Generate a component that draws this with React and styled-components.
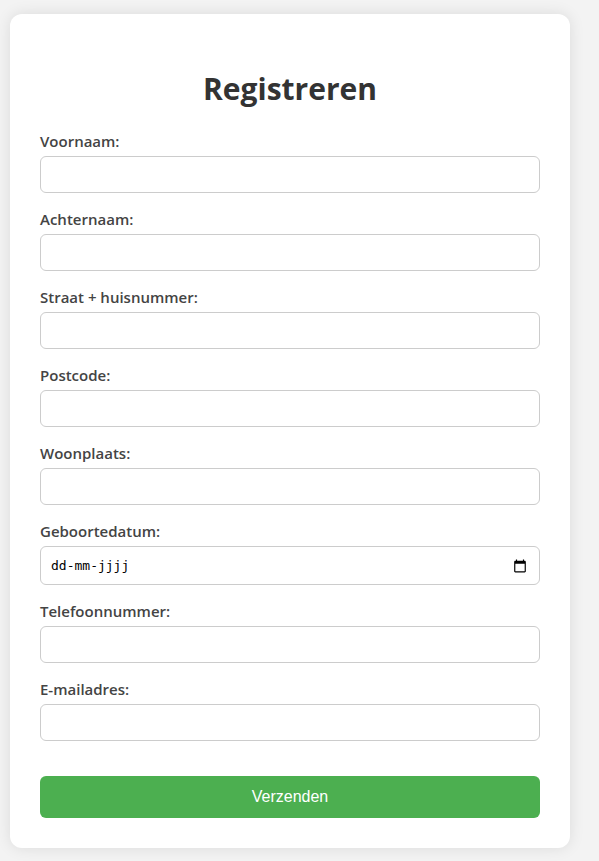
import React, { useState } from 'react'
import styled, { createGlobalStyle } from 'styled-components'

const GlobalStyle = createGlobalStyle`
  body {
    margin: 0;
    background-color: #f3f3f3;
    font-family: "Segoe UI", "Open Sans", "Noto Sans", sans-serif;
  }
`

const Page = styled.main`
  padding: 14px 29px 13px 10px;
`

const Card = styled.form`
  max-width: 500px;
  padding: 56px 30px 30px;
  background-color: white;
  border-radius: 12px;
  box-shadow: 0 0 15px rgba(0, 0, 0, 0.1);
`

const Title = styled.h1`
  margin: 0 0 22px;
  font-size: 30px;
  line-height: 38px;
  font-weight: 700;
  text-align: center;
  color: #333;
`

const Field = styled.div`
  display: flex;
  flex-direction: column;
  margin-bottom: 15px;
`

const Label = styled.label`
  margin-bottom: 3px;
  font-size: 15px;
  line-height: 23px;
  font-weight: 600;
  color: #444;
`

const Input = styled.input`
  box-sizing: border-box;
  width: 100%;
  height: 37px;
  padding: 10px;
  border: 1px solid #ccc;
  border-radius: 6px;
  background-color: white;
`

const DateBox = styled.div`
  display: flex;
  align-items: center;
  box-sizing: border-box;
  height: 39px;
  padding: 0 12px 0 10px;
  border: 1px solid #ccc;
  border-radius: 6px;
`

const DateInput = styled.input`
  flex: 1;
  min-width: 0;
  padding: 0;
  border: none;
  outline: none;
  font-family: "DejaVu Sans Mono", monospace;
  font-size: 13px;
  color: black;

  &::placeholder {
    color: black;
    opacity: 1;
  }
`

const Submit = styled.button`
  width: 100%;
  height: 42px;
  margin-top: 20px;
  border: none;
  border-radius: 6px;
  background-color: #4caf50;
  font-family: Arial, "Liberation Sans", sans-serif;
  font-size: 16px;
  color: white;
  cursor: pointer;
`

function CalendarIcon() {
  return (
    <svg width="14" height="14" viewBox="0 0 24 24" aria-hidden="true">
      <path d="M20 3h-1V1h-2v2H7V1H5v2H4c-1.100 0-2 .9-2 2v16c0 1.100.9 2 2 2h16c1.100 0 2-.9 2-2V5c0-1.100-.9-2-2-2zm0 18H4V8h16v13z" />
    </svg>
  )
}

const fields = [
  { name: 'voornaam', label: 'Voornaam:' },
  { name: 'achternaam', label: 'Achternaam:' },
  { name: 'straat', label: 'Straat + huisnummer:' },
  { name: 'postcode', label: 'Postcode:' },
  { name: 'woonplaats', label: 'Woonplaats:' },
  { name: 'geboortedatum', label: 'Geboortedatum:', type: 'date' },
  { name: 'telefoon', label: 'Telefoonnummer:', type: 'tel' },
  { name: 'email', label: 'E-mailadres:', type: 'email' },
]

function FormField({ field, value, onChange }) {
  const { name, label, type = 'text' } = field
  const inputProps = { id: name, name, value, onChange }

  return (
    <Field>
      <Label htmlFor={name}>{label}</Label>
      {type === 'date' ? (
        <DateBox>
          <DateInput {...inputProps} type="text" placeholder="dd-mm-jjjj" />
          <CalendarIcon />
        </DateBox>
      ) : (
        <Input {...inputProps} type={type} />
      )}
    </Field>
  )
}

function App() {
  const [values, setValues] = useState({})

  const handleChange = e => {
    const { name, value } = e.target
    setValues(prev => ({ ...prev, [name]: value }))
  }

  return (
    <>
      <GlobalStyle />
      <Page>
        <Card onSubmit={e => e.preventDefault()}>
          <Title>Registreren</Title>
          {fields.map(field => (
            <FormField
              key={field.name}
              field={field}
              value={values[field.name] || ''}
              onChange={handleChange}
            />
          ))}
          <Submit type="submit">Verzenden</Submit>
        </Card>
      </Page>
    </>
  )
}

export default App
